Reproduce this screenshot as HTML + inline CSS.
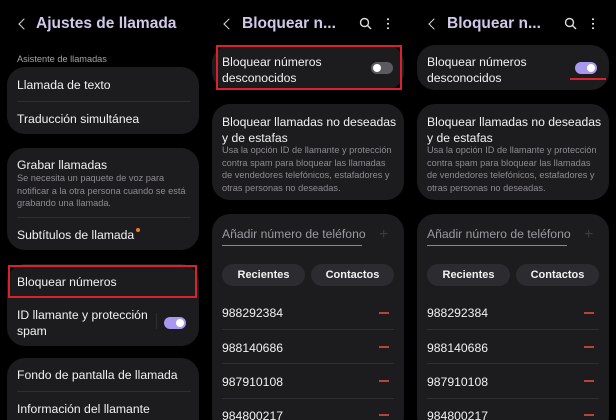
<!DOCTYPE html><html><head><meta charset="utf-8"><style>
*{margin:0;padding:0;box-sizing:border-box}
html,body{width:616px;height:420px;overflow:hidden}
body{background:#000;position:relative;font-family:"Liberation Sans",sans-serif;color:#f2f2f2}
.a{position:absolute;white-space:nowrap}
.card{position:absolute;background:#1c1b1e;border-radius:18px}
.t{font-size:12.2px;line-height:15px;margin-top:1px}
.s{font-size:9.2px;color:#8e8c91;line-height:12.5px}
.h{font-size:15.5px;font-weight:bold;color:#d2c8ea}
.dv{position:absolute;height:1px;background:#2f2e32}
.red{position:absolute;border:2px solid #d8232f}
.tg{position:absolute;width:22px;height:12px;border-radius:6px}
.tg i{position:absolute;top:2px;width:8px;height:8px;border-radius:50%;background:#fff}
.btn{position:absolute;height:22px;border-radius:11px;background:#2c2b2f;font-size:11px;font-weight:bold;text-align:center;line-height:22px}
.mn{position:absolute;width:10px;height:1.5px;background:#b8423c}
.bk{position:absolute;width:8px;height:8px;border-left:1.5px solid #ddd;border-bottom:1.5px solid #ddd;transform:rotate(45deg)}
</style></head><body>
<div class="bk" style="left:20px;top:20px"></div>
<div class="a h" style="left:36px;top:15px">Ajustes de llamada</div>
<div class="a s" style="left:17px;top:53px;color:#a5a3a9">Asistente de llamadas</div>
<div class="card" style="left:7px;top:67px;width:192px;height:67px"></div>
<div class="a t" style="left:17px;top:77px">Llamada de texto</div>
<div class="dv" style="left:17px;top:101px;width:174px"></div>
<div class="a t" style="left:17px;top:111px">Traducción simultánea</div>
<div class="card" style="left:7px;top:148px;width:192px;height:102px"></div>
<div class="a t" style="left:17px;top:157px">Grabar llamadas</div>
<div class="a s" style="left:17px;top:172px">Se necesita un paquete de voz para<br>notificar a la otra persona cuando se está<br>grabando una llamada.</div>
<div class="dv" style="left:17px;top:217px;width:174px"></div>
<div class="a t" style="left:17px;top:227px">Subtítulos de llamada<span style="display:inline-block;width:4px;height:4px;border-radius:50%;background:#f07a2a;vertical-align:top;margin-left:2px"></span></div>
<div class="card" style="left:7px;top:264px;width:192px;height:82px"></div>
<div class="a t" style="left:17px;top:274px">Bloquear números</div>
<div class="red" style="left:8px;top:265px;width:189px;height:33px"></div>
<div class="a t" style="left:17px;top:306px;line-height:16px">ID llamante y protección<br>spam</div>
<div class="dv" style="left:156px;top:313px;width:1px;height:16px"></div>
<div class="tg" style="left:164px;top:317px;background:#a898ee"><i style="left:12px"></i></div>
<div class="card" style="left:7px;top:358px;width:192px;height:80px"></div>
<div class="a t" style="left:17px;top:367px">Fondo de pantalla de llamada</div>
<div class="dv" style="left:17px;top:391px;width:174px"></div>
<div class="a t" style="left:17px;top:401px">Información del llamante</div>

<div style="position:absolute;left:205px;top:0;width:205px;height:420px">
<div class="bk" style="left:20px;top:20px"></div>
<div class="a h" style="left:37px;top:15px">Bloquear n...</div>
<svg class="a" style="left:154px;top:17px" width="13" height="13" viewBox="0 0 13 13"><circle cx="5.5" cy="5.5" r="4" fill="none" stroke="#ddd" stroke-width="1.4"/><path d="M8.5 8.5L12 12" stroke="#ddd" stroke-width="1.4"/></svg>
<div class="a" style="left:182px;top:17px;width:2px;height:12px;background:radial-gradient(circle,#ddd 0.9px,transparent 1.1px) 0 0/2px 4.5px"></div>
<div class="card" style="left:7px;top:45px;width:192px;height:45px"></div>
<div class="a t" style="left:17px;top:53px;line-height:16px">Bloquear números<br>desconocidos</div>
<div class="tg" style="left:166px;top:62px;background:#5b5a5e"><i style="left:2px"></i></div>
<div class="red" style="left:11px;top:45px;width:186px;height:45px"></div>
<div class="card" style="left:7px;top:104px;width:192px;height:96px"></div>
<div class="a t" style="left:17px;top:113px;line-height:16px">Bloquear llamadas no deseadas<br>y de estafas</div>
<div class="a s" style="left:17px;top:144px">Usa la opción ID de llamante y protección<br>contra spam para bloquear las llamadas<br>de vendedores telefónicos, estafadores y<br>otras personas no deseadas.</div>
<div class="card" style="left:7px;top:214px;width:192px;height:220px"></div>
<div class="a t" style="left:17px;top:226px;color:#9c9aa0">Añadir número de teléfono</div>
<div class="dv" style="left:17px;top:245px;width:140px;background:#8a888d"></div>
<div class="a" style="left:174px;top:226px;color:#3c3b3f;font-size:16px">+</div>
<div class="btn" style="left:17px;top:264px;width:83px">Recientes</div>
<div class="btn" style="left:106px;top:264px;width:83px">Contactos</div>
<div class="a t" style="left:17px;top:305px">988292384</div><div class="mn" style="left:174px;top:312px"></div>
<div class="dv" style="left:17px;top:329px;width:172px"></div>
<div class="a t" style="left:17px;top:340px">988140686</div><div class="mn" style="left:174px;top:346px"></div>
<div class="dv" style="left:17px;top:363px;width:172px"></div>
<div class="a t" style="left:17px;top:374px">987910108</div><div class="mn" style="left:174px;top:380px"></div>
<div class="dv" style="left:17px;top:398px;width:172px"></div>
<div class="a t" style="left:17px;top:408px">984800217</div><div class="mn" style="left:174px;top:414px"></div>
</div>
<div style="position:absolute;left:410px;top:0;width:206px;height:420px">
<div class="bk" style="left:20px;top:20px"></div>
<div class="a h" style="left:37px;top:15px">Bloquear n...</div>
<svg class="a" style="left:154px;top:17px" width="13" height="13" viewBox="0 0 13 13"><circle cx="5.5" cy="5.5" r="4" fill="none" stroke="#ddd" stroke-width="1.4"/><path d="M8.5 8.5L12 12" stroke="#ddd" stroke-width="1.4"/></svg>
<div class="a" style="left:182px;top:17px;width:2px;height:12px;background:radial-gradient(circle,#ddd 0.9px,transparent 1.1px) 0 0/2px 4.5px"></div>
<div class="card" style="left:7px;top:45px;width:192px;height:45px"></div>
<div class="a t" style="left:17px;top:53px;line-height:16px">Bloquear números<br>desconocidos</div>
<div class="tg" style="left:165px;top:62px;background:#a898ee"><i style="left:12px"></i></div>
<div class="a" style="left:160px;top:78px;width:36px;height:2px;background:#d8232f"></div>
<div class="card" style="left:7px;top:104px;width:192px;height:96px"></div>
<div class="a t" style="left:17px;top:113px;line-height:16px">Bloquear llamadas no deseadas<br>y de estafas</div>
<div class="a s" style="left:17px;top:144px">Usa la opción ID de llamante y protección<br>contra spam para bloquear las llamadas<br>de vendedores telefónicos, estafadores y<br>otras personas no deseadas.</div>
<div class="card" style="left:7px;top:214px;width:192px;height:220px"></div>
<div class="a t" style="left:17px;top:226px;color:#9c9aa0">Añadir número de teléfono</div>
<div class="dv" style="left:17px;top:245px;width:140px;background:#8a888d"></div>
<div class="a" style="left:174px;top:226px;color:#3c3b3f;font-size:16px">+</div>
<div class="btn" style="left:17px;top:264px;width:83px">Recientes</div>
<div class="btn" style="left:106px;top:264px;width:83px">Contactos</div>
<div class="a t" style="left:17px;top:305px">988292384</div><div class="mn" style="left:174px;top:312px"></div>
<div class="dv" style="left:17px;top:329px;width:172px"></div>
<div class="a t" style="left:17px;top:340px">988140686</div><div class="mn" style="left:174px;top:346px"></div>
<div class="dv" style="left:17px;top:363px;width:172px"></div>
<div class="a t" style="left:17px;top:374px">987910108</div><div class="mn" style="left:174px;top:380px"></div>
<div class="dv" style="left:17px;top:398px;width:172px"></div>
<div class="a t" style="left:17px;top:408px">984800217</div><div class="mn" style="left:174px;top:414px"></div>
</div>
</body></html>
